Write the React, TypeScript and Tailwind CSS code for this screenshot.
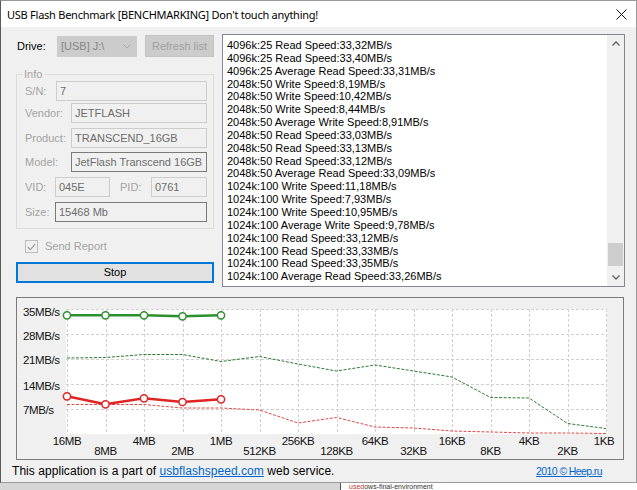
import React from "react";

const logLines = [
  "4096k:25 Read Speed:33,32MB/s",
  "4096k:25 Read Speed:33,40MB/s",
  "4096k:25 Average Read Speed:33,31MB/s",
  "2048k:50 Write Speed:8,19MB/s",
  "2048k:50 Write Speed:10,42MB/s",
  "2048k:50 Write Speed:8,44MB/s",
  "2048k:50 Average Write Speed:8,91MB/s",
  "2048k:50 Read Speed:33,03MB/s",
  "2048k:50 Read Speed:33,13MB/s",
  "2048k:50 Read Speed:33,12MB/s",
  "2048k:50 Average Read Speed:33,09MB/s",
  "1024k:100 Write Speed:11,18MB/s",
  "1024k:100 Write Speed:7,93MB/s",
  "1024k:100 Write Speed:10,95MB/s",
  "1024k:100 Average Write Speed:9,78MB/s",
  "1024k:100 Read Speed:33,12MB/s",
  "1024k:100 Read Speed:33,33MB/s",
  "1024k:100 Read Speed:33,35MB/s",
  "1024k:100 Average Read Speed:33,26MB/s",
];

const xLabels = ["16MB", "8MB", "4MB", "2MB", "1MB", "512KB", "256KB", "128KB", "64KB", "32KB", "16KB", "8KB", "4KB", "2KB", "1KB"];
const xs = xLabels.map((_, i) => 67 + i * 38.5);
const greenDash = [357, 356.5, 353.5, 353.5, 360.5, 355.5, 363, 370, 364, 370, 376, 396.5, 397, 422.5, 427.5];
const redDash = [403.5, 403.5, 403.5, 407, 407, 409, 422, 416.5, 426, 427, 430, 431, 432, 432, 432.5];
const greenSolid = [314.3, 314.3, 314.3, 315.3, 314.3];
const redSolid = [395.3, 403.3, 397.3, 401, 398.3];
const pts = (ys: number[]) => ys.map((y, i) => `${xs[i]},${y}`).join(" ");

function Chevron({ up }: { up?: boolean }) {
  return (
    <svg width="8" height="5" viewBox="0 0 8 5">
      <path d={up ? "M0.5 4.5 L4 1 L7.5 4.5" : "M0.5 0.5 L4 4 L7.5 0.5"} fill="none" stroke="#606060" strokeWidth="1.3" />
    </svg>
  );
}

function Field({ label, labelW, value, boxW, dark, mt }: { label: string; labelW: string; value: string; boxW: string; dark?: boolean; mt: string }) {
  return (
    <div className={`flex items-center h-[20px] ${mt}`}>
      <span className={`${labelW} text-[#a3a3a3]`}>{label}</span>
      <div className={`${boxW} h-[20px] border ${dark ? "border-[#7a7a7a]" : "border-[#cccccc]"} flex items-center pl-[3px] text-[#6d6d6d]`}>{value}</div>
    </div>
  );
}

function Chart() {
  const hy = [308, 333, 358, 383, 408];
  const yl = [
    ["35MB/s", 315],
    ["28MB/s", 338.5],
    ["21MB/s", 363],
    ["14MB/s", 389],
    ["7MB/s", 413],
  ] as const;
  return (
    <svg width="606" height="161" viewBox="17 297 606 161" className="block">
      <rect x="66" y="308" width="541" height="125" fill="#ffffff" />
      {hy.map((y) => (
        <line key={y} x1="66" x2="607" y1={y + 0.5} y2={y + 0.5} stroke="#d0d0d0" strokeDasharray="3 2" />
      ))}
      {xs.map((x) => (
        <line key={x} x1={Math.round(x) + 0.5} x2={Math.round(x) + 0.5} y1="308" y2="433" stroke="#d0d0d0" strokeDasharray="3 2" />
      ))}
      <polyline points={pts(greenDash)} fill="none" stroke="#2f7a2f" strokeWidth="1" strokeDasharray="3 1.5" />
      <polyline points={pts(redDash)} fill="none" stroke="#e04848" strokeWidth="1" strokeDasharray="3 1.5" />
      <polyline points={pts(greenSolid)} fill="none" stroke="#2e8f2e" strokeWidth="2.6" />
      <polyline points={pts(redSolid)} fill="none" stroke="#e02424" strokeWidth="2.6" />
      {greenSolid.map((y, i) => (
        <circle key={"g" + i} cx={xs[i]} cy={y} r="3.6" fill="#fff" stroke="#2e8f2e" strokeWidth="1.5" />
      ))}
      {redSolid.map((y, i) => (
        <circle key={"r" + i} cx={xs[i]} cy={y} r="3.6" fill="#fff" stroke="#e02424" strokeWidth="1.5" />
      ))}
      {yl.map(([t, y]) => (
        <text key={t} x="23" y={y} fontSize="11.5" fill="#111" fontFamily="Liberation Sans, Arial, sans-serif" letterSpacing="-0.4">
          {t}
        </text>
      ))}
      {xLabels.map((t, i) => (
        <text
          key={t}
          x={i === 14 ? 604 : xs[i]}
          y={i % 2 === 0 ? 443.5 : 454}
          textAnchor="middle"
          fontSize="11.5"
          fill="#111"
          fontFamily="Liberation Sans, Arial, sans-serif"
          letterSpacing="-0.4"
        >
          {t}
        </text>
      ))}
    </svg>
  );
}

export default function App() {
  return (
    <div className="w-[637px] h-[490px] overflow-hidden bg-[#d6d6d6] font-['Liberation_Sans',Arial,sans-serif] text-[11px] leading-[13px] text-black">
      <div className="h-[483px] flex flex-col bg-[#f0f0f0] border border-[#9a9a9a] border-l-[#5a5a5a]">
        <div className="h-[26px] shrink-0 bg-white flex items-center justify-between pl-[6px] pr-[9px] font-['Noto_Sans',sans-serif] text-[11px] text-black">
          <span className="tracking-[-0.25px]">USB Flash Benchmark [BENCHMARKING] Don't touch anything!</span>
          <svg width="11" height="11" viewBox="0 0 11 11">
            <path d="M0.5 0.5 L10.5 10.5 M10.5 0.5 L0.5 10.5" stroke="#111" strokeWidth="1" />
          </svg>
        </div>
        <div className="flex-1 flex flex-col pl-[15px]">
          <div className="flex mt-[7px]">
            <div className="w-[198px] flex flex-col">
              <div className="flex items-center h-[22px] mt-[1px]">
                <span className="ml-[1px] w-[40px]">Drive:</span>
                <div className="w-[80px] h-[21px] bg-[#cccccc] flex items-center justify-between pl-[4px] pr-[6px] text-[#858585]">
                  <span>[USB] J:\</span>
                  <svg width="8" height="5" viewBox="0 0 8 5">
                    <path d="M0.5 0.5 L4 4 L7.5 0.5" fill="none" stroke="#a8a8a8" strokeWidth="1" />
                  </svg>
                </div>
                <div className="ml-[8px] w-[69px] h-[22px] bg-[#cccccc] border border-[#c4c4c4] flex items-center justify-center text-[#a0a0a0]">Refresh list</div>
              </div>
              <div className="relative mt-[17px] border border-[#dcdcdc] pt-[6px] pb-[6px] pl-[8px] pr-[6px] flex flex-col">
                <span className="absolute left-[5px] -top-[7px] px-[2px] bg-[#f0f0f0] text-[#a3a3a3] leading-[13px]">Info</span>
                <Field label="S/N:" labelW="w-[31px]" value="7" boxW="w-[151px]" mt="mt-0" />
                <Field label="Vendor:" labelW="w-[46px]" value="JETFLASH" boxW="w-[136px]" mt="mt-[2px]" />
                <Field label="Product:" labelW="w-[46px]" value="TRANSCEND_16GB" boxW="w-[136px]" mt="mt-[5px]" />
                <Field label="Model:" labelW="w-[46px]" value="JetFlash Transcend 16GB" boxW="w-[136px]" dark mt="mt-[4px]" />
                <div className="flex items-center h-[20px] mt-[5px]">
                  <span className="w-[30px] text-[#a3a3a3]">VID:</span>
                  <div className="w-[55px] h-[20px] border border-[#cccccc] flex items-center pl-[3px] text-[#6d6d6d]">045E</div>
                  <span className="ml-[10px] w-[31px] text-[#a3a3a3]">PID:</span>
                  <div className="w-[56px] h-[20px] border border-[#cccccc] flex items-center pl-[3px] text-[#6d6d6d]">0761</div>
                </div>
                <Field label="Size:" labelW="w-[30px]" value="15468 Mb" boxW="w-[152px]" dark mt="mt-[5px]" />
              </div>
              <div className="flex items-center h-[13px] mt-[11px] ml-[9px]">
                <div className="w-[13px] h-[13px] border border-[#bcbcbc] flex items-center justify-center">
                  <svg width="9" height="8" viewBox="0 0 9 8">
                    <path d="M0.8 4 L3.4 6.6 L8.2 1" fill="none" stroke="#a0a0a0" strokeWidth="1.2" />
                  </svg>
                </div>
                <span className="ml-[7px] text-[#a3a3a3]">Send Report</span>
              </div>
              <div className="mt-[9px] h-[21px] w-[198px] border-2 border-[#0078d7] bg-[#e1e1e1] flex items-center justify-center font-normal">Stop</div>
            </div>
            <div className="ml-[8px] w-[403px] h-[253px] border border-[#828790] bg-white flex">
              <div className="flex-1 pl-[4px] pt-[4px] overflow-hidden">
                {logLines.map((l, i) => (
                  <div key={i} className="leading-[12.85px] whitespace-nowrap">
                    {l}
                  </div>
                ))}
              </div>
              <div className="w-[17px] bg-[#f0f0f0] flex flex-col">
                <div className="h-[17px] flex items-center justify-center">
                  <Chevron up />
                </div>
                <div className="flex-1 flex flex-col">
                  <div className="mt-[191px] h-[23px] mx-[1px] bg-[#cdcdcd]" />
                </div>
                <div className="h-[17px] flex items-center justify-center">
                  <Chevron />
                </div>
              </div>
            </div>
          </div>
          <div className="mt-[10px] w-[608px] h-[163px] border border-[#7a7a7a] bg-[#f0f0f0]">
            <Chart />
          </div>
          <div className="flex-1 flex items-center justify-between -ml-[4px] pr-[34px] pt-[1px]">
            <span className="text-[12px] tracking-[0.05px]">
              This application is a part of <span className="text-[#0066cc] underline">usbflashspeed.com</span> web service.
            </span>
            <span className="text-[#0066cc] underline text-[10.5px] tracking-[-0.6px]">2010 © Heep.ru</span>
          </div>
        </div>
      </div>
      <div className="flex h-[7px]">
        <div className="w-[340px] bg-[#d6d6d6]" />
        <div className="flex-1 bg-white border-l border-[#555] overflow-hidden pl-[8px]">
          <div className="leading-[7px] text-[7px] text-[#333] whitespace-nowrap">
            <span className="text-[#c0392b]">used</span>ows-final-environment
          </div>
        </div>
      </div>
    </div>
  );
}
